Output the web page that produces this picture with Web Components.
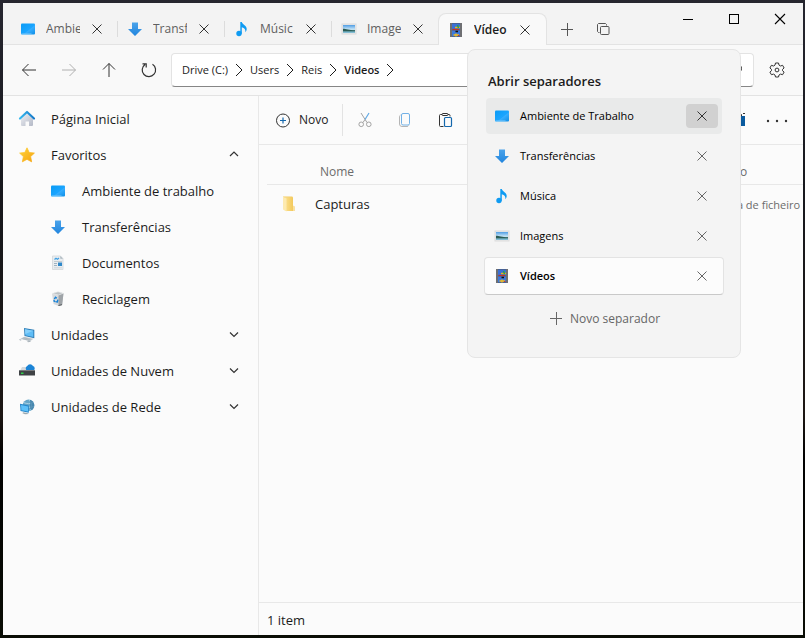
<!DOCTYPE html>
<html lang="pt">
<head>
<meta charset="utf-8">
<title>Vídeos</title>
<style>
  html, body { height: 100%; margin: 0; }
  body {
    font-family: "Open Sans", "Noto Sans", sans-serif;
    font-size: 13px;
    color: #1b1b1b;
    box-sizing: border-box;
    padding: 3px 2px 3px 3px;
    background: linear-gradient(180deg, #26262f 0, #17181d 30%, #1c1613 65%, #000 72%, #0a0d05 100%);
    overflow: hidden;
  }
</style>
</head>
<body>
<file-window></file-window>

<script>
const ICONS = {
  desktop: '<defs><linearGradient id="g" x1="0" y1="0" x2="1" y2="1"><stop offset="0" stop-color="#0a9bf5"/><stop offset=".55" stop-color="#1aa5ff"/><stop offset=".6" stop-color="#35adff"/><stop offset="1" stop-color="#0e8ee6"/></linearGradient></defs><rect x="1" y="2.500" width="14" height="11" rx="1" fill="url(#g)"/><path d="M1.500 13h10" stroke="#7cc9f8"/>',
  down: '<defs><linearGradient id="g" x1="0" y1="0" x2="0" y2="1"><stop offset="0" stop-color="#4aa3ea"/><stop offset="1" stop-color="#2185de"/></linearGradient></defs><path d="M5 1.500h6V8h4L8 15 1 8h4z" fill="url(#g)"/>',
  music: '<circle cx="5" cy="12.500" r="2.700" fill="#0f9bf2"/><path d="M6.300 1h1.500c.3 2.500 4.700 3.300 4.900 6.800.1 1.500-.6 2.700-1.400 3.400.5-2.500-.7-4.200-3.500-4.900v6.400H6.300z" fill="#0f9bf2"/>',
  image: '<defs><linearGradient id="g" x1="0" y1="0" x2="0" y2="1"><stop offset="0" stop-color="#4f9de4"/><stop offset=".55" stop-color="#c9e6f7"/><stop offset=".7" stop-color="#5f9fa6"/><stop offset="1" stop-color="#8cc4e0"/></linearGradient></defs><rect x="1" y="3" width="14" height="10" fill="#e9e9e9" stroke="#dcdcdc"/><rect x="2" y="4" width="12" height="8" fill="url(#g)"/><path d="M2 7.800c3 .2 6 1.500 12 1.500v.9c-4-.1-8 .4-12 0z" fill="#2b5c55"/>',
  video: '<rect x="2" y="1" width="12" height="14" fill="#505256"/><rect x="4" y="1.500" width="8" height="6.200" fill="#3a70d6"/><rect x="4" y="8.300" width="8" height="6.200" fill="#3c79dc"/><path d="M2.500 2h1M2.500 4h1M2.500 6h1M2.500 8h1M2.500 10h1M2.500 12h1M2.500 14h1M12.500 2h1M12.500 4h1M12.500 6h1M12.500 8h1M12.500 10h1M12.500 12h1M12.500 14h1" stroke="#c8c8c8"/><path d="M7 5.500h5" stroke="#e8b71b" stroke-width="1.500"/><path d="M9.500 3l1 3" stroke="#25a04b" stroke-width="1.500"/><path d="M4.500 7.500h6.500" stroke="#c03127" stroke-width="1.300"/><path d="M7.500 9.500H10" stroke="#111" stroke-width="1.500"/><path d="M5.500 13h5.500M8 11.500v3" stroke="#f0bd24" stroke-width="1.400"/><path d="M10 13.500h1.500" stroke="#d33a2a"/>',
  home: '<defs><linearGradient id="g" x1="0" y1="0" x2="1" y2="1"><stop offset="0" stop-color="#eef0f4"/><stop offset="1" stop-color="#b3b8c6"/></linearGradient><linearGradient id="r" x1="0" y1="0" x2="1" y2="0"><stop offset="0" stop-color="#36b8ee"/><stop offset="1" stop-color="#1478c8"/></linearGradient></defs><path d="M2 8l6-5.500L14 8v6a1 1 0 0 1-1 1h-3v-4.500H6.500V15H3a1 1 0 0 1-1-1z" fill="url(#g)"/><path d="M1 7.500L8 1l7 6.500" fill="none" stroke="url(#r)" stroke-width="2.200" stroke-linecap="round" stroke-linejoin="round"/>',
  star: '<defs><linearGradient id="g" x1="0" y1="0" x2="1" y2="1"><stop offset="0" stop-color="#ffd43c"/><stop offset="1" stop-color="#f5a20c"/></linearGradient></defs><path d="M8 .8l2.200 4.700 5.200.6-3.800 3.500 1 5.200L8 12.300l-4.600 2.500 1-5.200L.6 6.100l5.200-.6z" fill="url(#g)" stroke="url(#g)" stroke-linejoin="round" stroke-width=".8"/>',
  doc: '<path d="M2.500 1h8L13 3.500V14.500H2.500z" fill="#e9edf0" stroke="#d2d7da" stroke-width=".8"/><path d="M10.300 1v2.800H13z" fill="#a9b4bb"/><path d="M4.500 4.500L6 3.300l1.500.9L9 3" fill="none" stroke="#3fa0e4" stroke-width="1.300"/><path d="M4 6.500h8" stroke="#c4ccd1"/><path d="M4 8.500h3M4 10.500h3" stroke="#9fb3c1"/><rect x="8" y="7.500" width="4" height="3.500" fill="#2f88c9"/><path d="M4 12.800h8" stroke="#cfd5d9"/>',
  bin: '<path d="M2 2.500L8 .8l5.500 1.400-1.300 11.500L8.500 15 3.500 13z" fill="#d7dadd"/><path d="M8.500 4l5-1.800-1.300 11.500L8.500 15z" fill="#9fa4a8"/><path d="M2 2.500L8 .8l5.500 1.400L8.500 4z" fill="#bcc1c4" stroke="#eceeef" stroke-width=".6"/><path d="M8.500 14.500l3.500-.8" stroke="#55595c"/><path d="M4.300 8.200L5.500 6.300l1.400 1M7.800 8.700l-.4 2.200-1.300-.1M5.600 11L4 10l.3-1" fill="none" stroke="#1683d8" stroke-width="1.400"/>',
  pc: '<path d="M5 1l10.300 1.800v8.400L5.500 9z" fill="#2f7fb8"/><path d="M6 2.200l8.300 1.500v6.300L6.300 8.200z" fill="#5fbdf6"/><path d="M6 2.200l8.300 1.500-8 3.300z" fill="#86d0fb"/><path d="M5.500 9.700l9 2-3.500 2.500-9.800-2.400z" fill="#c3cbd1"/><path d="M4.500 10.800l7 1.600M3.400 11.700l7 1.600" stroke="#a3adb4" stroke-width=".7"/><path d="M.5 12.300l2.200.5-.8.700-1.600-.4zM8 14.500l3-.5 1 .6-3 .6z" fill="#98a4ac"/>',
  cloud: '<path d="M1 8l2-4h6l6 4z" fill="#d4d8db"/><path d="M8.500 7.500a2.300 2.300 0 0 1-.3-4.400A3.300 3.300 0 0 1 14 3a2.400 2.400 0 0 1 .3 4.500z" fill="#1c84d6"/><path d="M0 7h16v5.500H0z" fill="#3f4245"/><path d="M0 7h16v1H0z" fill="#777b7f"/><rect x="2" y="9.500" width="2.500" height="1.500" fill="#2fd04a"/>',
  net: '<circle cx="9.500" cy="6.300" r="5.800" fill="#64a5c8"/><path d="M9.500.7c3 1.500 4 7 1.500 10.500M4.500 3.500c3.500 1.500 7 1.500 9.500 0M4 7.500c4 1 7.500 1 11 0" fill="none" stroke="#b6d9ea" stroke-width=".8"/><path d="M11 .8a5.800 5.800 0 0 1 2 10.200l-2-1z" fill="#3a7ba4" opacity=".7"/><path d="M1 4.800l8.800 1.800v7.200L1.500 12z" fill="#2486ca"/><path d="M2 6l7 1.400v5.200L2.400 11.200z" fill="#5cc0f9"/><path d="M4 13.200l4 .9 2 .9-4 .2-2.500-1z" fill="#9aa8b0"/>',
  folder: '<defs><linearGradient id="g" x1="0" y1="0" x2="1" y2="0"><stop offset="0" stop-color="#fbe08e"/><stop offset="1" stop-color="#f3c95c"/></linearGradient></defs><path d="M2 .5h9.500V12l2 .5v2.500H4z" fill="#f3cc66"/><path d="M4 1.200h8V15H4z" fill="url(#g)"/><path d="M2 .5l3.500 2V15.500L2 13.500z" fill="#fdeab0"/><path d="M12 9.500l2 1V15h-2z" fill="#f9e0a0"/>',
  back: '<path d="M15 8H1.500M7.500 2L1.500 8l6 6" fill="none" stroke="currentColor"/>',
  fwd: '<path d="M1 8h13.500M8.500 2l6 6-6 6" fill="none" stroke="currentColor"/>',
  up: '<path d="M8 15V1.500M2 7.500l6-6 6 6" fill="none" stroke="currentColor"/>',
  refresh: '<path d="M4 2.500A6.700 6.700 0 1 0 11.500 2.300M1.500 1.800h3.700v3.700" fill="none" stroke="currentColor" stroke-width="1.200"/>',
  gear: '<path d="M6.500 1h3l.5 2.100 1.500.9 2.100-.7L15.100 6l-1.600 1.400v1.300l1.600 1.400-1.500 2.600-2.100-.6-1.500.9L9.500 15h-3L6 13l-1.500-.9-2.100.6L.9 10.100l1.600-1.400V7.400L.9 6l1.500-2.700 2.100.7L6 3.100z" fill="none" stroke="currentColor" stroke-linejoin="round"/><circle cx="8" cy="8" r="1.900" fill="none" stroke="currentColor"/>',
  close: '<path d="M3.500 3.500l9 9M12.500 3.500l-9 9" stroke="currentColor"/>',
  wclose: '<path d="M3 3l10 10M13 3L3 13" stroke="currentColor" stroke-width="1.100"/>',
  max: '<rect x="3.500" y="3.500" width="9" height="9" fill="none" stroke="currentColor"/>',
  min: '<path d="M3 8.500h10" stroke="currentColor"/>',
  plus: '<path d="M2 8.500h12M8.500 2v13" stroke="currentColor"/>',
  stack: '<path d="M4.500 11.500h-1l-1-1v-7l1-1h7l1 1v1" fill="none" stroke="currentColor"/><rect x="5.500" y="5.500" width="8.500" height="8" rx="1" fill="none" stroke="currentColor"/>',
  chevr: '<path d="M5 2l6 6-6 6" fill="none" stroke="currentColor"/>',
  chevd: '<path d="M4 5.500l4 4 4-4" fill="none" stroke="currentColor" stroke-width="1.200"/>',
  chevu: '<path d="M4 9l4-4 4 4" fill="none" stroke="currentColor" stroke-width="1.200"/>',
  search: '<circle cx="10" cy="6.500" r="4.500" fill="none" stroke="currentColor"/><path d="M6.500 10L2 14.500" stroke="currentColor"/>',
  add: '<circle cx="8" cy="8.500" r="6.500" fill="none" stroke="#333"/><path d="M8 5.500v6M5 8.500h6" stroke="#1468ad" stroke-width="1.200"/>',
  cut: '<path d="M4 1l6 9.500" stroke="#a3a3a3"/><path d="M12 1L8 7.500" stroke="#5fa8e4" stroke-width="1.200"/><path d="M8 7.500l-2 3" stroke="#a3a3a3"/><circle cx="4.200" cy="12.300" r="2.300" fill="none" stroke="#a3a3a3"/><circle cx="11.800" cy="12.300" r="2.300" fill="none" stroke="#a3a3a3"/>',
  copy: '<path d="M3.500 3a2 2 0 0 0-1 1.800V12a2.500 2.500 0 0 0 2.500 2.500h5a2 2 0 0 0 1.700-1" fill="none" stroke="#b5b5b5"/><rect x="4.500" y="1.500" width="8" height="11.500" rx="1.500" fill="none" stroke="#72b1e6"/>',
  paste: '<path d="M6.500 14.500h-3a1 1 0 0 1-1-1v-10a1 1 0 0 1 1-1h1.500M11 2.500h1a1 1 0 0 1 1 1v1" fill="none" stroke="#333"/><rect x="5" y="1.500" width="6" height="2" rx="1" fill="none" stroke="#333"/><rect x="7.500" y="5.500" width="7" height="9" rx="1" fill="none" stroke="#1468ad" stroke-width="1.200"/>',
  pane: '<path d="M1.500 2.500h9v11h-9z" fill="none" stroke="#333"/><rect x="8" y="4" width="6" height="10" fill="#0a5a9e"/><path d="M12 1.500h2" stroke="#333"/>',
  more: '<circle cx="-1" cy="9" r="1.200" fill="currentColor"/><circle cx="8" cy="9" r="1.200" fill="currentColor"/><circle cx="17" cy="9" r="1.200" fill="currentColor"/>'
};

const BUTTON = `
  button { font: inherit; color: inherit; background: none; border: 0; padding: 0; margin: 0;
           display: flex; align-items: center; justify-content: center; }
  a { color: inherit; text-decoration: none; }
`;

class Base extends HTMLElement {
  connectedCallback() {
    if (this.shadowRoot) return;
    this.attachShadow({ mode: "open" }).innerHTML = `<style>${BUTTON}${this.css()}</style>${this.html()}`;
  }
  at(n) { return this.getAttribute(n) || ""; }
}

customElements.define("fm-icon", class extends Base {
  css() { return `:host { display: block; flex: none; width: 16px; height: 16px; } svg { display: block; width: 100%; height: 100%; overflow: visible; }`; }
  html() { return `<svg viewBox="0 0 16 16" aria-hidden="true">${ICONS[this.at("name")]}</svg>`; }
});

customElements.define("fm-button", class extends Base {
  css() { return `:host { display: block; flex: none; } button { width: 100%; height: 100%; } fm-icon { color: var(--icon, #333); }`; }
  html() { return `<button aria-label="${this.at("label")}"><fm-icon name="${this.at("icon")}"></fm-icon></button>`; }
});

customElements.define("fm-tab", class extends Base {
  css() { return `
    :host { display: flex; align-items: center; flex: none; width: 107px; height: 30px; box-sizing: border-box;
            padding: 0 12px 0 10px; color: #5f5f5f; position: relative; }
    :host::after { content: ""; width: 1px; height: 16px; background: #dcdcdc; position: absolute; right: -1px; top: 7px; }
    :host([last])::after { display: none; }
    .t { display: flex; align-items: center; gap: 10px; }
    .t span { width: 34px; overflow: hidden; white-space: nowrap; line-height: 20px; font-size: 12px; text-align: left; }
    fm-button { width: 16px; height: 24px; margin-left: auto; }
    :host([active]) { background: #f9f9f9; border: 1px solid #e3e3e3; border-bottom: 0; border-radius: 8px 8px 0 0;
            color: #1b1b1b; width: 109px; height: 32px; margin-bottom: -1px; padding: 0 13px 0 9px; font-weight: 600; }
    :host([active])::after { display: none; }
  `; }
  html() { return `<button class="t" role="tab"><fm-icon name="${this.at("icon")}"></fm-icon><span><slot></slot></span></button>
    <fm-button icon="close" label="Fechar separador"></fm-button>`; }
});

customElements.define("title-bar", class extends Base {
  css() { return `
    :host { display: flex; align-items: flex-end; height: 41px; background: #f3f3f3; border-bottom: 1px solid #e3e3e3; padding-left: 7px; flex: none; }
    .tabs { display: flex; align-items: flex-end; }
    .act { width: 36px; height: 30px; --icon: #555; }
    .first { margin-left: 2px; }
    .win { display: flex; align-self: flex-start; margin-left: auto; --icon: #000; }
    .win fm-button { width: 46px; height: 32px; }
  `; }
  html() { return `<div class="tabs" role="tablist">
      <fm-tab icon="desktop">Ambie</fm-tab><fm-tab icon="down">Transf</fm-tab><fm-tab icon="music">Músic</fm-tab>
      <fm-tab icon="image" last>Image</fm-tab><fm-tab icon="video" active>Vídeo</fm-tab>
    </div>
    <fm-button class="act first" icon="plus" label="Novo separador"></fm-button>
    <fm-button class="act" icon="stack" label="Abrir separadores"></fm-button>
    <div class="win"><fm-button icon="min" label="Minimizar"></fm-button><fm-button icon="max" label="Maximizar"></fm-button><fm-button icon="wclose" label="Fechar"></fm-button></div>`; }
});

customElements.define("nav-bar", class extends Base {
  css() { return `
    :host { display: flex; align-items: center; height: 50px; background: #f9f9f9; border-bottom: 1px solid #e3e3e3; padding: 0 6px; flex: none; }
    fm-button { width: 40px; height: 32px; }
    .off { --icon: #b0b0b0; }
    nav { flex: 1; min-width: 0; height: 34px; box-sizing: border-box; display: flex; align-items: center; gap: 3px; margin: 0 3px 0 2px;
          padding: 0 10px; background: #fff; border: 1px solid #e3e3e3; border-bottom-color: #868686; border-radius: 4px;
          font-size: 11px; line-height: 16px; white-space: nowrap; }
    b { font-weight: 600; }
    .end { margin-left: auto; }
    nav fm-button { width: 16px; }
  `; }
  html() {
    const ch = '<fm-icon name="chevr"></fm-icon>';
    return `<fm-button icon="back" label="Retroceder"></fm-button><fm-button class="off" icon="fwd" label="Avançar"></fm-button>
      <fm-button icon="up" label="Subir"></fm-button><fm-button icon="refresh" label="Atualizar"></fm-button>
      <nav aria-label="Caminho"><a href="#c">Drive (C:)</a>${ch}<a href="#u">Users</a>${ch}<a href="#r">Reis</a>${ch}<a href="#v"><b>Videos</b></a>${ch}
      <fm-button class="end" icon="search" label="Procurar"></fm-button></nav>
      <fm-button icon="gear" label="Definições"></fm-button>`;
  }
});

customElements.define("tree-item", class extends Base {
  css() { return `
    :host { display: flex; align-items: center; height: 36px; padding: 0 16px; }
    :host([child]) { padding-left: 47px; }
    a { display: flex; align-items: center; gap: 16px; line-height: 20px; flex: 1; }
  `; }
  html() { const s = this.at("state");
    return `<a href="#"><fm-icon name="${this.at("icon")}"></fm-icon><slot></slot></a>` +
      (s ? `<fm-button icon="${s === "open" ? "chevu" : "chevd"}" label="${s === "open" ? "Recolher" : "Expandir"}"></fm-button>` : ""); }
});

customElements.define("side-bar", class extends Base {
  css() { return `:host { display: block; flex: none; width: 255px; border-right: 1px solid #e8e8e8; padding-top: 5px; }`; }
  html() { return `<nav aria-label="Navegação">
    <tree-item icon="home">Página Inicial</tree-item>
    <tree-item icon="star" state="open">Favoritos</tree-item>
    <tree-item child icon="desktop">Ambiente de trabalho</tree-item>
    <tree-item child icon="down">Transferências</tree-item>
    <tree-item child icon="doc">Documentos</tree-item>
    <tree-item child icon="bin">Reciclagem</tree-item>
    <tree-item icon="pc" state="closed">Unidades</tree-item>
    <tree-item icon="cloud" state="closed">Unidades de Nuvem</tree-item>
    <tree-item icon="net" state="closed">Unidades de Rede</tree-item></nav>`; }
});

customElements.define("command-bar", class extends Base {
  css() { return `
    :host { display: flex; align-items: center; height: 48px; border-bottom: 1px solid #e8e8e8; padding: 0 8px 0 16px; flex: none; }
    .new { gap: 8px; font-size: 12px; line-height: 16px; }
    i { width: 1px; height: 32px; background: #e3e3e3; margin: 0 2px 0 14px; }
    fm-button { width: 40px; height: 32px; }
    .end { margin-left: auto; }
    .more { width: 36px; }
  `; }
  html() { return `<button class="new"><fm-icon name="add"></fm-icon>Novo</button><i></i>
    <fm-button icon="cut" label="Cortar"></fm-button><fm-button icon="copy" label="Copiar"></fm-button><fm-button icon="paste" label="Colar"></fm-button>
    <fm-button class="end" icon="pane" label="Painel"></fm-button><fm-button class="more" icon="more" label="Mais"></fm-button>`; }
});

customElements.define("file-list", class extends Base {
  css() { return `
    :host { display: block; flex: 1; min-height: 0; overflow: hidden; padding-left: 8px; }
    table { width: 100%; border-collapse: collapse; table-layout: fixed; text-align: left; }
    .type { width: 96px; }
    th { height: 25px; padding: 14px 0 0 53px; border-bottom: 1px solid #e8e8e8; font-size: 12px; font-weight: 400; color: #6b6b6b; }
    th + th { padding-left: 16px; }
    td { height: 38px; padding: 0; white-space: nowrap; }
    td + td { font-size: 11px; color: #6b6b6b; padding-left: 8px; overflow: hidden; }
    a { display: flex; align-items: center; gap: 18px; padding-left: 14px; }
  `; }
  html() { return `<table><colgroup><col><col class="type"></colgroup>
    <thead><tr><th>Nome</th><th>Tipo</th></tr></thead>
    <tbody><tr><td><a href="#"><fm-icon name="folder"></fm-icon>Capturas</a></td><td>Pasta de ficheiro</td></tr></tbody></table>`; }
});

customElements.define("menu-tab", class extends Base {
  css() { return `
    :host { display: flex; align-items: center; height: 36px; box-sizing: border-box; padding: 0 4px 0 8px; margin: 0 2px; border-radius: 4px; color: #000; --icon: #666; }
    .t { gap: 10px; flex: 1; justify-content: flex-start; line-height: 18px; }
    fm-button { width: 32px; height: 24px; border-radius: 4px; }
    :host([hover]) { background: #e9eaea; }
    :host([hover]) fm-button { background: #d1d1d1; --icon: #333; }
    :host([active]) { margin: -1px 0; height: 38px; padding: 0 5px 0 9px; background: #fcfcfc; border: 1px solid #e3e3e3; border-bottom-color: #c9c9c9; font-weight: 600; }
  `; }
  html() { return `<button class="t"><fm-icon name="${this.at("icon")}"></fm-icon><slot></slot></button><fm-button icon="close" label="Fechar"></fm-button>`; }
});

customElements.define("tab-menu", class extends Base {
  css() { return `
    :host { display: block; box-sizing: border-box; width: 274px; padding: 20px 16px 23px; background: #f4f4f4; border: 1px solid #e5e5e5; border-radius: 8px; font-size: 11px; }
    h2 { margin: 0 4px 6px; font-size: 13px; line-height: 22px; font-weight: 600; }
    .list { display: flex; flex-direction: column; gap: 4px; }
    .add { margin: 8px auto 0; width: 100%; height: 32px; gap: 6px; color: #666; font-size: 12px; }
  `; }
  html() { return `<h2>Abrir separadores</h2><div class="list">
    <menu-tab icon="desktop" hover>Ambiente de Trabalho</menu-tab><menu-tab icon="down">Transferências</menu-tab><menu-tab icon="music">Música</menu-tab>
    <menu-tab icon="image">Imagens</menu-tab><menu-tab icon="video" active>Vídeos</menu-tab></div>
    <button class="add"><fm-icon name="plus"></fm-icon>Novo separador</button>`; }
});

customElements.define("file-window", class extends Base {
  css() { return `
    :host { display: flex; flex-direction: column; height: 100%; background: #fbfbfb; position: relative; overflow: hidden; }
    .body { display: flex; flex: 1; min-height: 0; }
    main { display: flex; flex-direction: column; flex: 1; min-width: 0; }
    footer { border-top: 1px solid #e8e8e8; padding: 7px 8px 5px; line-height: 20px; }
    tab-menu { position: absolute; top: 46px; right: 62px; }
  `; }
  html() { return `<title-bar></title-bar><nav-bar></nav-bar>
    <div class="body"><side-bar></side-bar><main><command-bar></command-bar><file-list></file-list><footer>1 item</footer></main></div>
    <tab-menu></tab-menu>`; }
});
</script>
</body>
</html>
